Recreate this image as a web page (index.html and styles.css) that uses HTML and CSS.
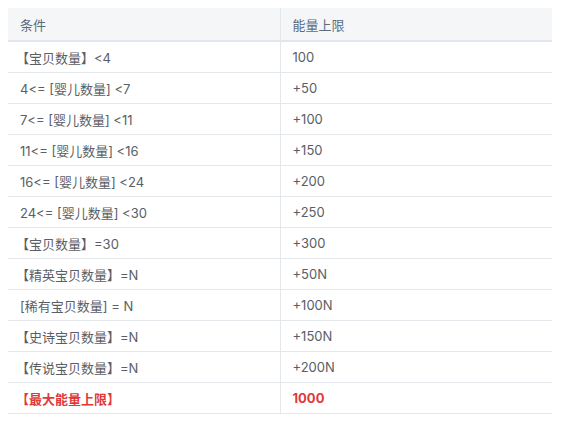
FILE: index.html
```html
<!DOCTYPE html>
<html lang="zh">
<head>
<meta charset="utf-8">
<link rel="stylesheet" href="styles.css">
</head>
<body>
<table class="tbl">
  <thead>
    <tr><th>条件</th><th>能量上限</th></tr>
  </thead>
  <tbody>
    <tr><td class="ind">【宝贝数量】&lt;4</td><td>100</td></tr>
    <tr><td>4&lt;= [婴儿数量] &lt;7</td><td>+50</td></tr>
    <tr><td>7&lt;= [婴儿数量] &lt;11</td><td>+100</td></tr>
    <tr><td>11&lt;= [婴儿数量] &lt;16</td><td>+150</td></tr>
    <tr><td>16&lt;= [婴儿数量] &lt;24</td><td>+200</td></tr>
    <tr><td>24&lt;= [婴儿数量] &lt;30</td><td>+250</td></tr>
    <tr><td class="ind">【宝贝数量】=30</td><td>+300</td></tr>
    <tr><td class="ind">【精英宝贝数量】=N</td><td>+50N</td></tr>
    <tr><td>[稀有宝贝数量] = N</td><td>+100N</td></tr>
    <tr><td class="ind">【史诗宝贝数量】=N</td><td>+150N</td></tr>
    <tr><td class="ind">【传说宝贝数量】=N</td><td>+200N</td></tr>
    <tr class="max"><td class="ind">【最大能量上限】</td><td>1000</td></tr>
  </tbody>
</table>
</body>
</html>
```

FILE: styles.css
```css
body {
  margin: 8px;
  background: #fff;
  font-family: Inter, "Noto Sans CJK SC", sans-serif;
  font-size: 13px;
  color: #5a5e66;
}
.tbl {
  width: 544px;
  border-collapse: collapse;
  table-layout: fixed;
}
.tbl th {
  background: #f5f6f8;
  color: #5b6b80;
  font-weight: normal;
  text-align: left;
  height: 32px;
  padding: 0 12px;
  border-bottom: 2px solid #e2e6ec;
}
.tbl td {
  height: 30px;
  padding: 0 12px;
  border-bottom: 1px solid #e4e7ec;
}
.tbl th:first-child, .tbl td:first-child {
  border-right: 1px solid #e4e7ec;
}
.tbl td.ind {
  padding-left: 8px;
}
.tbl .max td {
  color: #e0393a;
  font-weight: bold;
}
```
